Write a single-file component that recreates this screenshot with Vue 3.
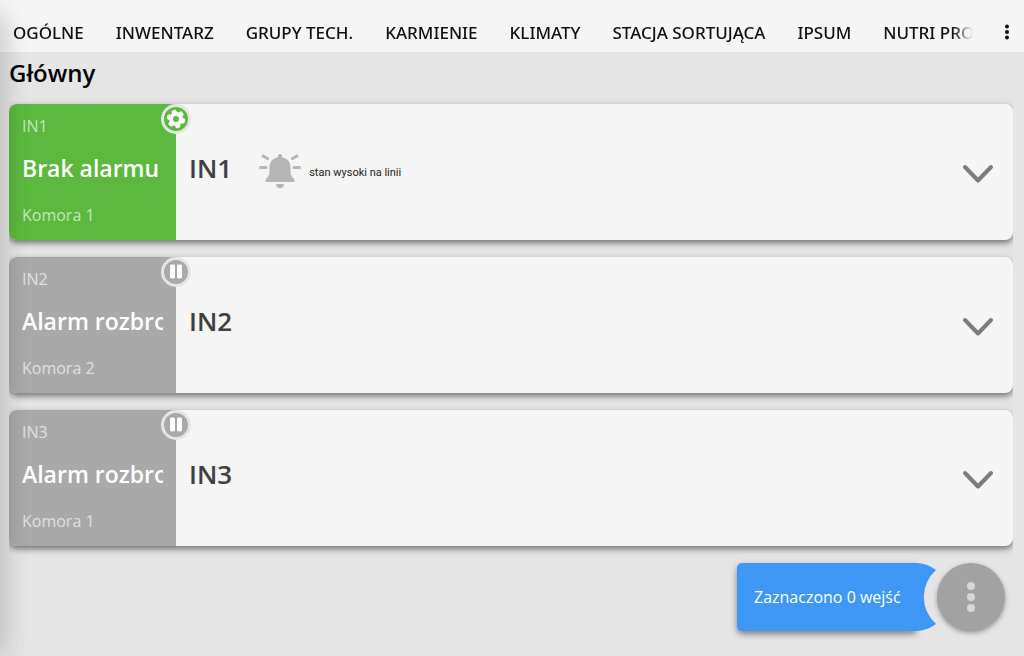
<script setup>
const tabs = [
  'OGÓLNE',
  'INWENTARZ',
  'GRUPY TECH.',
  'KARMIENIE',
  'KLIMATY',
  'STACJA SORTUJĄCA',
  'IPSUM',
  'NUTRI PRO',
]

const inputs = [
  { id: 'IN1', state: 'Brak alarmu', room: 'Komora 1', active: true, note: 'stan wysoki na linii' },
  { id: 'IN2', state: 'Alarm rozbrojony', room: 'Komora 2', active: false },
  { id: 'IN3', state: 'Alarm rozbrojony', room: 'Komora 1', active: false },
]
</script>

<template>
  <div class="page">
    <header class="topbar">
      <nav class="tabs">
        <button v-for="tab in tabs" :key="tab" type="button" class="tab">{{ tab }}</button>
      </nav>
      <button type="button" class="more" aria-label="Menu">
        <svg width="6" height="16" viewBox="0 0 6 16" fill="#111">
          <circle cx="3" cy="2.5" r="2" />
          <circle cx="3" cy="8" r="2" />
          <circle cx="3" cy="13.5" r="2" />
        </svg>
      </button>
    </header>

    <main class="content">
      <h1 class="title">Główny</h1>
      <div class="list">
        <article v-for="item in inputs" :key="item.id" class="card">
          <section class="status" :class="{ active: item.active }">
            <span class="small">{{ item.id }}</span>
            <strong class="state">{{ item.state }}</strong>
            <span class="small">{{ item.room }}</span>
            <span class="badge">
              <svg v-if="item.active" width="20" height="20" viewBox="-10 -10 20 20">
                <g fill="#fff">
                  <circle r="7" />
                  <rect v-for="a in [15, 75, 135]" :key="a" x="-9.2" y="-2.5" width="18.4" height="5" rx="1.4" :transform="`rotate(${a})`" />
                </g>
                <circle r="3" fill="#5cb83f" />
              </svg>
              <svg v-else width="20" height="20" viewBox="0 0 20 20" fill="#fff">
                <rect x="4" y="2.5" width="5" height="14" rx="1.4" />
                <rect x="11" y="2.5" width="5" height="14" rx="1.4" />
              </svg>
            </span>
          </section>
          <section class="body">
            <h2 class="name">{{ item.id }}</h2>
            <template v-if="item.note">
              <svg class="bell" width="44" height="36" viewBox="0 0 44 36" fill="#b6b6b6">
                <path d="M22 1a2 2 0 0 1 2 2v1.300c5.200.9 8.500 4.700 8.500 9.900v4.300c0 3.500 1.300 5.300 3.300 7.300 1.700 1.700.9 3.200-1 3.200H9.200c-1.900 0-2.700-1.500-1-3.200 2-2 3.300-3.800 3.300-7.300v-4.300c0-5.200 3.300-9 8.500-9.900V3a2 2 0 0 1 2-2z" />
                <path d="M18 31h8c0 2.500-1.700 4.200-4 4.200s-4-1.700-4-4.200z" />
                <path d="M2.500 14.500h5.500M36 14.500h5.500M5 3l4.500 2.500M39 3l-4.500 2.500" fill="none" stroke="#b6b6b6" stroke-width="3" stroke-linecap="round" />
              </svg>
              <span class="note">{{ item.note }}</span>
            </template>
            <button type="button" class="expand" :aria-label="`Rozwiń ${item.id}`">
              <svg width="32" height="20" viewBox="0 0 32 20" fill="none" stroke="#7d7d7d" stroke-width="4" stroke-linecap="round" stroke-linejoin="round">
                <path d="M3 3l13 13.500L29 3" />
              </svg>
            </button>
          </section>
        </article>
      </div>
      <footer class="actions">
        <div class="selection">
          Zaznaczono 0 wejść
          <svg class="tail" width="22" height="68" viewBox="0 0 22 68" fill="#3f97f6">
            <path d="M0 0h2A34 34 0 0 1 22 7A36 36 0 0 0 22 61A34 34 0 0 1 2 68H0z" />
          </svg>
        </div>
        <button type="button" class="fab" aria-label="Akcje">
          <svg width="8" height="30" viewBox="0 0 8 30" fill="#d6d6d6">
            <circle cx="4" cy="4" r="4" />
            <circle cx="4" cy="15" r="4" />
            <circle cx="4" cy="26" r="4" />
          </svg>
        </button>
      </footer>
    </main>
    <div class="edge"></div>
  </div>
</template>

<style>
body {
  background: #e5e5e5;
}
</style>

<style scoped>
.page {
  position: relative;
  min-height: 100vh;
  background: #e5e5e5;
  font-family: "Segoe UI", "Open Sans", "Noto Sans", sans-serif;
  color: #000;
  overflow: hidden;
}
button {
  font: inherit;
  color: inherit;
  border: 0;
  padding: 0;
  background: none;
  cursor: pointer;
}
.topbar {
  display: flex;
  align-items: flex-end;
  height: 52px;
  background: #f5f5f5;
}
.tabs {
  flex: 1;
  min-width: 0;
  display: flex;
  gap: 32px;
  padding-left: 13px;
  overflow: hidden;
  mask-image: linear-gradient(to left, transparent, #000 20px);
}
.tab {
  flex: none;
  height: 40px;
  font-family: "Segoe UI", "Noto Sans", sans-serif;
  font-size: 17px;
  font-weight: 500;
  white-space: nowrap;
  color: #111;
}
.more {
  width: 51px;
  height: 40px;
  padding: 0 0 0 16px;
  display: flex;
  align-items: center;
  justify-content: center;
}
.title {
  margin: 0;
  padding: 4px 9px 0;
  font-size: 24px;
  line-height: 34px;
  font-weight: 600;
}
.list {
  display: flex;
  flex-direction: column;
  gap: 17px;
  margin: 4px 11px 0 9px;
  padding: 10px 0 17px;
  overflow: hidden;
}
.card {
  display: flex;
  min-height: 136px;
  border-radius: 8px;
  background: #f5f5f5;
  box-shadow: 0 3px 6px rgba(0, 0, 0, 0.5);
}
.status {
  position: relative;
  flex: none;
  box-sizing: border-box;
  width: 167px;
  padding: 11px 13px 14px;
  display: flex;
  flex-direction: column;
  justify-content: space-between;
  border-radius: 8px 0 0 8px;
  background: #a9a9a9;
}
.status.active {
  background: #5cb83f;
}
.small {
  font-size: 16px;
  line-height: 22px;
  color: rgba(255, 255, 255, 0.65);
}
.state {
  margin-bottom: 6px;
  overflow: hidden;
  white-space: nowrap;
  font-size: 23px;
  line-height: 32px;
  font-weight: 600;
  color: #fff;
}
.badge {
  position: absolute;
  top: 0;
  right: -15px;
  box-sizing: border-box;
  width: 30px;
  height: 30px;
  display: flex;
  align-items: center;
  justify-content: center;
  border: 3px solid #e5e5e5;
  border-radius: 50%;
  background: inherit;
}
.body {
  flex: 1;
  min-width: 0;
  display: flex;
  align-items: center;
  padding: 0 19px 0 13px;
}
.name {
  margin: 0 26px 8px 0;
  font-size: 26px;
  line-height: 36px;
  font-weight: 600;
  color: #404040;
}
.bell {
  flex: none;
  margin: 0 7px 2px 0;
}
.note {
  font-family: "Segoe UI", Roboto, sans-serif;
  font-size: 11px;
  color: #222;
}
.expand {
  display: flex;
  margin: 4px 0 0 auto;
}
.actions {
  display: flex;
  justify-content: flex-end;
  gap: 21px;
  padding-right: 19px;
}
.selection {
  position: relative;
  box-sizing: border-box;
  width: 179px;
  height: 68px;
  padding-left: 17px;
  display: flex;
  align-items: center;
  border-radius: 5px 0 0 5px;
  background: #3f97f6;
  box-shadow: 0 3px 6px rgba(0, 0, 0, 0.45);
  font-size: 16px;
  white-space: nowrap;
  color: #fff;
}
.tail {
  position: absolute;
  top: 0;
  right: -20px;
}
.fab {
  width: 68px;
  height: 68px;
  display: flex;
  align-items: center;
  justify-content: center;
  border-radius: 50%;
  background: #a2a2a2;
  box-shadow: 0 2px 5px rgba(0, 0, 0, 0.35);
}
.edge {
  position: absolute;
  top: 14px;
  bottom: 0;
  left: -10px;
  width: 10px;
  box-shadow: 0 0 26px rgba(0, 0, 0, 0.4);
  pointer-events: none;
}
</style>
